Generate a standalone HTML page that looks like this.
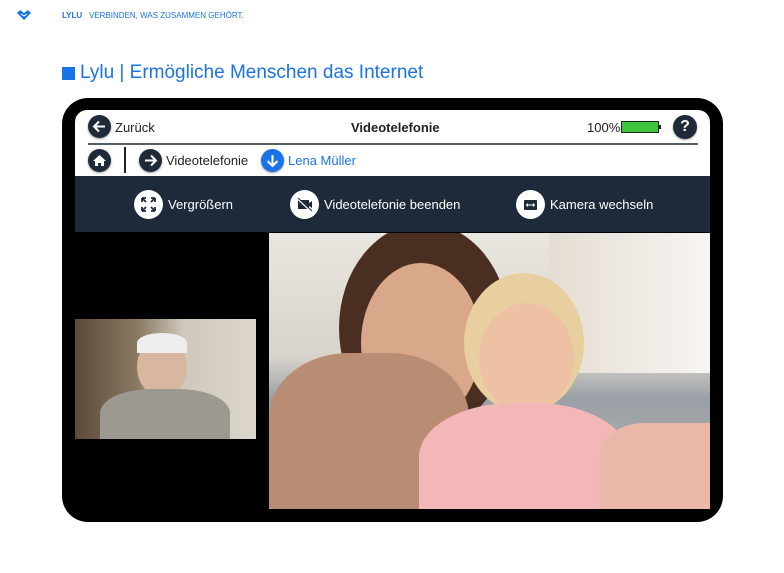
<!DOCTYPE html>
<html><head><meta charset="utf-8"><style>
*{margin:0;padding:0;box-sizing:border-box}
body{width:784px;height:573px;background:#fff;font-family:"Liberation Sans",sans-serif;position:relative;overflow:hidden}
.a{position:absolute}
.c{position:absolute;border-radius:50%;background:#1e2a3a;box-shadow:0 1px 2px rgba(0,0,0,.4)}
.w{position:absolute;border-radius:50%;background:#fff}
.t{position:absolute;font-size:13px;color:#222;white-space:nowrap}
.d{position:absolute;font-size:13px;color:#fff;white-space:nowrap}
</style></head><body>
<svg class="a" style="left:17px;top:10px" width="14" height="10" viewBox="0 0 14 10"><path d="M0 3L3 0L7 3L11 0L14 3L7 10Z" fill="#1a73e8"/><path d="M4 4L7 6L10 4" stroke="#fff" stroke-width="1" fill="none"/></svg>
<div class="a" style="left:62px;top:11px;font-size:8px;color:#1a73e8;font-weight:bold">LYLU</div>
<div class="a" style="left:89px;top:11px;font-size:8px;color:#1a73e8">VERBINDEN, WAS ZUSAMMEN GEHÖRT.</div>
<div class="a" style="left:62px;top:67px;width:13px;height:13px;background:#1a73e8"></div>
<div class="a" style="left:80px;top:62px;font-size:19px;color:#1a73e8">Lylu | Ermögliche Menschen das Internet</div>

<div class="a" style="left:62px;top:98px;width:661px;height:424px;background:#000;border-radius:26px"></div>
<div class="a" style="left:75px;top:110px;width:635px;height:66px;background:#fff;border-radius:12px 12px 0 0"></div>
<div class="a" style="left:88px;top:143px;width:610px;height:2px;background:#555d66"></div>
<div class="c" style="left:88px;top:115px;width:23px;height:23px"></div>
<svg class="a" style="left:88px;top:115px" width="23" height="23"><path d="M17 11.5H6M11 6.5L6 11.5L11 16.5" stroke="#fff" stroke-width="2" fill="none"/></svg>
<div class="t" style="left:115px;top:120px">Zurück</div>
<div class="t" style="left:351px;top:120px;font-weight:bold">Videotelefonie</div>
<div class="t" style="left:587px;top:120px">100%</div>
<div class="a" style="left:621px;top:121px;width:38px;height:12px;border:1.5px solid #222;background:#3fc43f"></div>
<div class="a" style="left:659px;top:125px;width:2px;height:4px;background:#222"></div>
<div class="c" style="left:673px;top:115px;width:24px;height:24px;color:#fff;font-weight:bold;font-size:16px;text-align:center;line-height:24px">?</div>
<div class="c" style="left:88px;top:149px;width:23px;height:23px"></div>
<svg class="a" style="left:88px;top:149px" width="23" height="23"><path d="M5 12L11.5 6L18 12H16V17H13V14H10V17H7V12Z" fill="#fff"/></svg>
<div class="a" style="left:124px;top:147px;width:2px;height:26px;background:#222"></div>
<div class="c" style="left:139px;top:149px;width:23px;height:23px"></div>
<svg class="a" style="left:139px;top:149px" width="23" height="23"><path d="M6 11.5H17M12 6.5L17 11.5L12 16.5" stroke="#fff" stroke-width="2" fill="none"/></svg>
<div class="t" style="left:166px;top:153px">Videotelefonie</div>
<div class="c" style="left:261px;top:149px;width:23px;height:23px;background:#1a73e8"></div>
<svg class="a" style="left:261px;top:149px" width="23" height="23"><path d="M11.5 6V17M6.5 12L11.5 17L16.5 12" stroke="#fff" stroke-width="2" fill="none"/></svg>
<div class="t" style="left:288px;top:153px;color:#1a73e8">Lena Müller</div>

<div class="a" style="left:75px;top:176px;width:635px;height:56px;background:#1e2a3a"></div>
<div class="w" style="left:134px;top:190px;width:29px;height:29px"></div>
<svg class="a" style="left:134px;top:190px" width="29" height="29"><path d="M8 8l4 4M8 8v4M8 8h4M21 8l-4 4M21 8v4M21 8h-4M8 21l4-4M8 21v-4M8 21h4M21 21l-4-4M21 21v-4M21 21h-4" stroke="#1e2a3a" stroke-width="1.8" fill="none"/></svg>
<div class="d" style="left:168px;top:197px">Vergrößern</div>
<div class="w" style="left:290px;top:190px;width:29px;height:29px"></div>
<svg class="a" style="left:290px;top:190px" width="29" height="29"><rect x="8" y="10" width="11" height="9" fill="#1e2a3a"/><path d="M19 13l3-2v7l-3-2Z" fill="#1e2a3a"/><path d="M7 8L22 22" stroke="#fff" stroke-width="2"/><path d="M8 8L22 21" stroke="#1e2a3a" stroke-width="1"/></svg>
<div class="d" style="left:324px;top:197px">Videotelefonie beenden</div>
<div class="w" style="left:516px;top:190px;width:29px;height:29px"></div>
<svg class="a" style="left:516px;top:190px" width="29" height="29"><rect x="8" y="10" width="13" height="10" rx="1" fill="#1e2a3a"/><path d="M11 15h7M12 13.5l-1.5 1.5 1.5 1.5M17 13.5l1.5 1.5-1.5 1.5" stroke="#fff" stroke-width="1" fill="none"/></svg>
<div class="d" style="left:550px;top:197px">Kamera wechseln</div>

<div class="a" style="left:269px;top:233px;width:441px;height:276px;overflow:hidden;background:linear-gradient(180deg,#e9e6e0 0%,#d8d3cc 45%,#9aa0a6 60%,#b9b6b3 100%)">
 <div class="a" style="left:280px;top:0;width:161px;height:140px;background:linear-gradient(90deg,#e4ddd3,#f7f5f2)"></div>
 <div class="a" style="left:70px;top:-10px;width:170px;height:210px;border-radius:50%;background:#4a2e20"></div>
 <div class="a" style="left:92px;top:30px;width:120px;height:160px;border-radius:50%;background:#d9a78a"></div>
 <div class="a" style="left:0;top:120px;width:200px;height:160px;border-radius:40% 40% 0 0;background:#b98d73"></div>
 <div class="a" style="left:195px;top:40px;width:120px;height:140px;border-radius:50%;background:#e8cfa0"></div>
 <div class="a" style="left:210px;top:70px;width:95px;height:110px;border-radius:50%;background:#eec1a5"></div>
 <div class="a" style="left:150px;top:170px;width:210px;height:120px;border-radius:45% 45% 0 0;background:#f2b7b6"></div>
 <div class="a" style="left:330px;top:190px;width:111px;height:90px;background:#eab8a8;border-radius:40% 0 0 0"></div>
</div>
<div class="a" style="left:75px;top:319px;width:181px;height:120px;overflow:hidden;background:linear-gradient(90deg,#5b4a3a 0%,#8a7a62 35%,#cfc8bc 60%,#dcd6cc 100%)">
 <div class="a" style="left:62px;top:18px;width:50px;height:60px;border-radius:50%;background:#d8b7a0"></div>
 <div class="a" style="left:62px;top:14px;width:50px;height:20px;border-radius:50% 50% 0 0;background:#eee"></div>
 <div class="a" style="left:25px;top:70px;width:130px;height:60px;border-radius:40% 40% 0 0;background:#9c9892"></div>
</div>
</body></html>
